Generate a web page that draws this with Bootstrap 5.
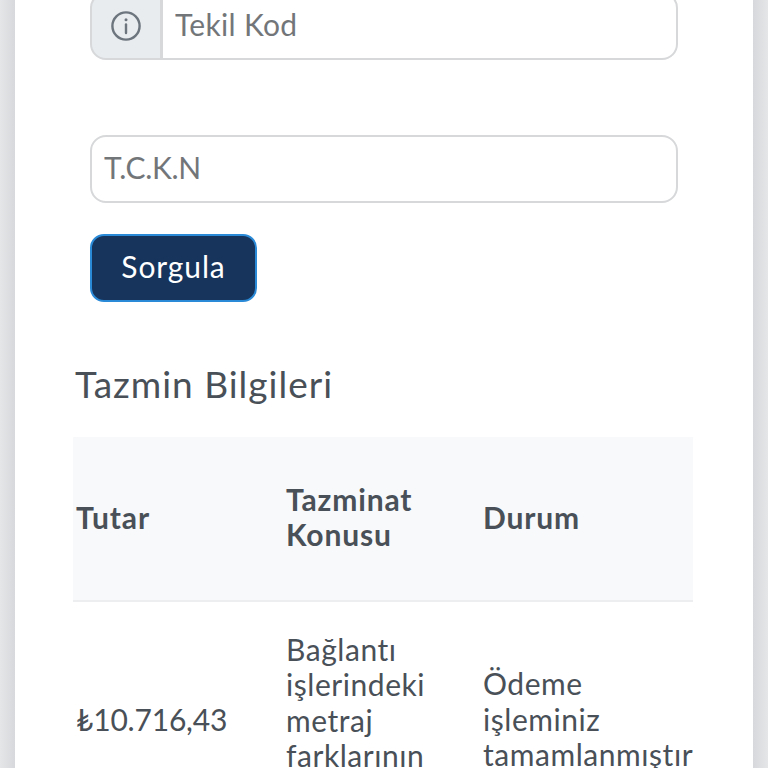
<!DOCTYPE html>
<html lang="tr">
<head>
<meta charset="utf-8">
<title>Tazmin Bilgileri</title>
<link href="https://cdn.jsdelivr.net/npm/bootstrap@5.3.0/dist/css/bootstrap.min.css" rel="stylesheet">
<style>
html, body { height: 768px; overflow: hidden; }
body { background: linear-gradient(90deg, #e4e6e8 0, #d6d8db 15px, #d6d8db 753px, #e4e6e8 768px); font-family: "Lato", "Liberation Sans", sans-serif; color: #495057; }
.sheet { margin: 0 15px; height: 768px; background: #fff; padding: 0 60px 0 58px; overflow: hidden; }
.form-zone { margin: -8px 15px 0 17px; }
.gap-after { margin-bottom: 75px; }
.field-tall, .form-zone .input-group-text { height: 68px; font-size: 30px; border: 2px solid #d6d8da; border-radius: 16px; }
.form-zone .input-group-text { width: 72px; justify-content: center; background: #e9ecef; color: #6c757d; padding: 0; }
.field-tall { padding: 0 12px 4px; color: #495057; letter-spacing: -.3px; }
.input-group .field-tall { padding-left: 12px; letter-spacing: .3px; }
.field-tall::placeholder { color: #737679; opacity: 1; }
.query-btn { display: block; margin-top: 31px; width: 167px; height: 68px; font-size: 30px; letter-spacing: .9px; line-height: 1; padding: 0 0 4px; background: #16345c; color: #fff; border: 2px solid #2b8ad8; border-radius: 14px; }
.section-title { font-size: 37px; font-weight: 400; letter-spacing: 1px; line-height: 42px; margin: 61px 0 32px 2px; color: #495057; }
.clip-zone { overflow: hidden; width: 620px; }
.data-grid { width: 760px; table-layout: fixed; margin: 0; font-size: 30px; line-height: 35.4px; letter-spacing: .55px; color: #495057; }
.data-grid th, .data-grid td { vertical-align: middle; padding: 45px 3px 47px; color: #495057; }
.data-grid thead th { background: #f8f9fa; font-weight: 700; letter-spacing: .85px; border-bottom: 2px solid #eceef0; }
.data-grid tbody td { padding: 30px 3px 30px; border: 0; }
.data-grid tbody td.lift-cell { padding-top: 31px; padding-bottom: 33px; }
.data-grid tbody td.money-cell { letter-spacing: -.2px; }
.col-a { width: 210px; }
.col-b { width: 197px; }
</style>
</head>
<body>
<div class="sheet">
  <div class="form-zone">
    <div class="input-group gap-after">
      <span class="input-group-text">
        <svg width="32" height="32" viewBox="0 0 32 32" fill="none" stroke="#6c757d" stroke-width="2.4" aria-hidden="true"><circle cx="16" cy="16" r="13.6"/><path d="M16 14.5V23" stroke-linecap="round"/><circle cx="16" cy="9.8" r="1.5" fill="#6c757d" stroke="none"/></svg>
      </span>
      <input type="text" class="form-control field-tall" placeholder="Tekil Kod">
    </div>
    <input type="text" class="form-control field-tall" placeholder="T.C.K.N">
    <button type="button" class="btn query-btn">Sorgula</button>
  </div>
  <h2 class="section-title">Tazmin Bilgileri</h2>
  <div class="clip-zone">
    <table class="table data-grid">
      <thead>
        <tr><th class="col-a">Tutar</th><th class="col-b">Tazminat Konusu</th><th>Durum</th></tr>
      </thead>
      <tbody>
        <tr>
          <td class="lift-cell money-cell">₺10.716,43</td>
          <td>Bağlantı<br>işlerindeki<br>metraj<br>farklarının<br>ödenmesi</td>
          <td class="lift-cell">Ödeme<br>işleminiz<br>tamamlanmıştır.</td>
        </tr>
      </tbody>
    </table>
  </div>
</div>
<script src="https://cdn.jsdelivr.net/npm/bootstrap@5.3.0/dist/js/bootstrap.bundle.min.js"></script>
</body>
</html>
